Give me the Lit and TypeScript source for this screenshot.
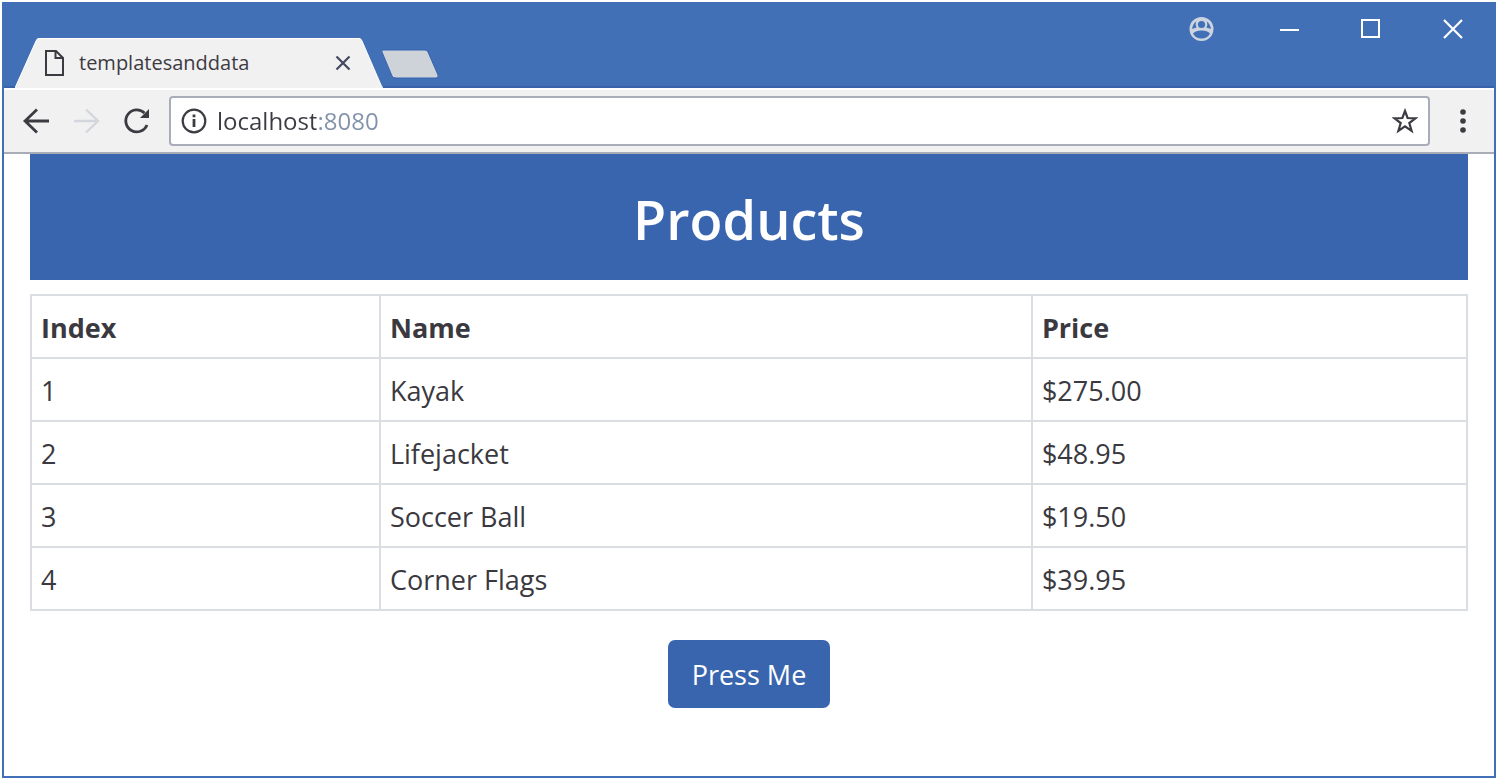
import { LitElement, html, css } from "lit";
import { customElement, state } from "lit/decorators.js";

interface Product {
  name: string;
  price: number;
}

@customElement("browser-titlebar")
export class BrowserTitlebar extends LitElement {
  static styles = css`
    :host {
      display: flex;
      justify-content: space-between;
      align-items: stretch;
      height: 84px;
      padding-left: 11px;
      background: #4270b6;
      border-bottom: 2px solid #3863ab;
    }
    .tabs {
      display: flex;
      align-items: flex-end;
      margin-bottom: -2px;
    }
    .slope {
      display: block;
      flex: none;
    }
    .tab {
      display: flex;
      align-items: center;
      box-sizing: border-box;
      width: 320px;
      height: 50px;
      padding: 0 6px 2px;
      background: #f1f1f2;
      color: #3d3b42;
      font-size: 20px;
      border-top: 1px solid #fff;
    }
    .title {
      flex: 1;
      margin-left: 14px;
      white-space: nowrap;
    }
    button {
      display: grid;
      place-items: center;
      padding: 0;
      border: 0;
      background: none;
      color: inherit;
    }
    .new-tab {
      align-self: flex-end;
      margin: 0 0 9px -2px;
    }
    .controls {
      display: flex;
      align-items: flex-start;
      color: #fff;
    }
    .controls button {
      width: 82px;
      height: 54px;
    }
    .controls .profile {
      width: 94px;
    }
  `;

  render() {
    return html`
      <div class="tabs">
        <svg class="slope" width="24" height="50" viewBox="0 0 24 50">
          <path d="M0 50 L21 3 Q22 0 24 0 V50 Z" fill="#f1f1f2" />
          <path d="M0 50 L21 3 Q22 .5 24 .5" fill="none" stroke="#fff" />
        </svg>
        <div class="tab">
          <svg width="20" height="26" viewBox="0 0 20 26" fill="none" stroke="#3d3b42" stroke-width="2">
            <path d="M1 1 H11 L18 8 V25 H1 Z M10.500 1.5 V8 H17.500" />
          </svg>
          <span class="title">templatesanddata</span>
          <button aria-label="Close tab">
            <svg width="20" height="20" viewBox="0 0 20 20" stroke="#43485c" stroke-width="2.2">
              <path d="M3.5 3.5 L16.5 16.5 M16.5 3.5 L3.5 16.5" />
            </svg>
          </button>
        </div>
        <svg class="slope" width="24" height="50" viewBox="0 0 24 50">
          <path d="M0 0 Q2 0 3 3 L22 47 Q23 50 24 50 H0 Z" fill="#f1f1f2" />
          <path d="M0 .5 Q2 .5 3 3 L22 47 Q23 49.500 24 49.500" fill="none" stroke="#fff" />
        </svg>
        <button class="new-tab" aria-label="New tab">
          <svg width="58" height="30" viewBox="0 0 58 30">
            <path
              d="M2 1 H44 Q46 1 47 3 L57 26 Q58 29 55 29 H15 Q12 29 11 27 L1 3 Q0 1 2 1 Z"
              fill="#ced2d9"
              stroke="#3863ab"
            />
          </svg>
        </button>
      </div>
      <div class="controls">
        <button class="profile" aria-label="Profile">
          <svg width="26" height="26" viewBox="0 0 26 26">
            <circle cx="13.500" cy="13" r="12" fill="#ccd4df" />
            <circle cx="13.500" cy="8.500" r="3.600" fill="#4270b6" />
            <path d="M5 17.500 Q7.500 14.500 13.500 14.500 Q19.500 14.500 22 17.500 Q19.500 22.500 13.500 22.500 Q7.500 22.500 5 17.500 Z" fill="#4270b6" />
            <path d="M8.200 5.500 Q4.500 8 4.200 13 Q6 12 8.600 11.500 Q7 8.500 8.200 5.500 Z" fill="#4270b6" />
            <path d="M18.800 5.500 Q22.500 8 22.800 13 Q21 12 18.400 11.500 Q20 8.500 18.800 5.500 Z" fill="#4270b6" />
          </svg>
        </button>
        <button aria-label="Minimize">
          <svg width="20" height="20" viewBox="0 0 20 20" stroke="currentColor" stroke-width="2">
            <path d="M1 11 H20" />
          </svg>
        </button>
        <button aria-label="Maximize">
          <svg width="20" height="20" viewBox="0 0 20 20" fill="none" stroke="currentColor" stroke-width="2">
            <rect x="1" y="1" width="17" height="17" />
          </svg>
        </button>
        <button aria-label="Close">
          <svg width="20" height="20" viewBox="0 0 20 20" stroke="currentColor" stroke-width="2.2">
            <path d="M1 1 L19 19 M19 1 L1 19" />
          </svg>
        </button>
      </div>
    `;
  }
}

@customElement("browser-toolbar")
export class BrowserToolbar extends LitElement {
  static styles = css`
    :host {
      display: flex;
      align-items: center;
      box-sizing: border-box;
      height: 66px;
      padding-left: 7px;
      background: #f1f1f2;
      border-top: 2px solid #fff;
      border-bottom: 2px solid #a9adb7;
      color: #3d3b42;
    }
    button {
      display: grid;
      place-items: center;
      flex: none;
      width: 50px;
      height: 50px;
      padding: 0;
      border: 0;
      background: none;
      color: inherit;
    }
    .menu {
      width: 64px;
    }
    .address {
      display: flex;
      align-items: center;
      flex: 1;
      box-sizing: border-box;
      height: 50px;
      margin-left: 8px;
      padding-left: 10px;
      background: #fff;
      border: 2px solid #a9adb9;
      border-radius: 4px;
    }
    .address button {
      width: 46px;
      height: 46px;
    }
    input {
      flex: 1;
      min-width: 0;
      margin-left: 10px;
      padding: 0 0 2px;
      border: 0;
      outline: 0;
      font: inherit;
      font-size: 24px;
      color: transparent;
      background: linear-gradient(to right, #3d3b42 99px, #8292ab 99px);
      background-clip: text;
      -webkit-background-clip: text;
    }
  `;

  render() {
    return html`
      <button aria-label="Back">
        <svg width="28" height="28" viewBox="0 0 28 28" fill="none" stroke="currentColor" stroke-width="2.800">
          <path d="M27 14 H3 M15 2.500 L3 14 L15 25.500" />
        </svg>
      </button>
      <button aria-label="Forward" disabled>
        <svg width="28" height="28" viewBox="0 0 28 28" fill="none" stroke="#d3d6dc" stroke-width="2.400">
          <path d="M2 14 H26 M14 2.500 L26 14 L14 25.500" />
        </svg>
      </button>
      <button aria-label="Reload">
        <svg width="28" height="28" viewBox="0 0 28 28" fill="none" stroke="currentColor" stroke-width="2.800">
          <path d="M25 18 A11 11 0 1 1 22.500 6" />
          <path d="M27 2 V11 H18 Z" fill="currentColor" stroke="none" />
        </svg>
      </button>
      <div class="address">
        <svg width="26" height="26" viewBox="0 0 26 26" fill="none" stroke="currentColor" stroke-width="2.200">
          <circle cx="13" cy="13" r="11.300" />
          <path d="M13 11 V19 M13 6.500 V9.300" stroke-width="2.800" />
        </svg>
        <input type="text" aria-label="Address" value="localhost:8080" spellcheck="false" />
        <button aria-label="Bookmark this page">
          <svg width="26" height="26" viewBox="0 0 26 26" fill="none" stroke="currentColor" stroke-width="2.200">
            <path
              d="M13 3 L15.600 10 L23.500 10.300 L17.300 15 L19.600 22.800 L13 18.400 L6.400 22.800 L8.700 15 L2.500 10.300 L10.400 10 Z"
            />
          </svg>
        </button>
      </div>
      <button class="menu" aria-label="Menu">
        <svg width="8" height="26" viewBox="0 0 8 26" fill="currentColor">
          <circle cx="5" cy="4" r="2.800" />
          <circle cx="5" cy="13" r="2.800" />
          <circle cx="5" cy="22" r="2.800" />
        </svg>
      </button>
    `;
  }
}

@customElement("product-page")
export class ProductPage extends LitElement {
  static styles = css`
    :host {
      display: flex;
      flex-direction: column;
      align-items: center;
      padding: 0 26px 68px;
      color: #3a3940;
      font-size: 27px;
      line-height: 40px;
    }
    h1 {
      box-sizing: border-box;
      width: 100%;
      margin: 0 0 14px;
      padding: 32px 16px 28px;
      background: #3965ae;
      color: #fff;
      font-size: 54px;
      font-weight: 600;
      line-height: 66px;
      text-align: center;
    }
    table {
      width: 100%;
      table-layout: fixed;
      border-collapse: collapse;
    }
    th,
    td {
      box-sizing: border-box;
      height: 63px;
      padding: 2px 9px 0;
      border: 2px solid #dadde2;
      text-align: left;
      vertical-align: middle;
    }
    th {
      font-weight: 700;
    }
    .index {
      width: 24.3%;
    }
    .price {
      width: 30.3%;
    }
    .press {
      margin-top: 29px;
      padding: 15px 24px 13px;
      border: 0;
      border-radius: 7px;
      background: #3965ae;
      color: #fff;
      font: inherit;
    }
  `;

  @state() private products: Product[] = [
    { name: "Kayak", price: 275 },
    { name: "Lifejacket", price: 48.95 },
    { name: "Soccer Ball", price: 19.5 },
    { name: "Corner Flags", price: 39.95 },
  ];

  render() {
    return html`
      <h1>Products</h1>
      <table>
        <thead>
          <tr>
            <th class="index" scope="col">Index</th>
            <th scope="col">Name</th>
            <th class="price" scope="col">Price</th>
          </tr>
        </thead>
        <tbody>
          ${this.products.map(
            (p, i) => html`
              <tr>
                <td>${i + 1}</td>
                <td>${p.name}</td>
                <td>$${p.price.toFixed(2)}</td>
              </tr>
            `
          )}
        </tbody>
      </table>
      <button class="press">Press Me</button>
    `;
  }
}

@customElement("app-root")
export class AppRoot extends LitElement {
  static styles = css`
    :host {
      display: flex;
      box-sizing: border-box;
      min-height: 100vh;
      padding: 2px 4px 4px 2px;
      background: #fff;
      font-family: "Open Sans", "Noto Sans", sans-serif;
    }
    .window {
      flex: 1;
      min-width: 0;
      border: 2px solid #4270b6;
      border-top: 0;
    }
  `;

  render() {
    return html`
      <div class="window">
        <browser-titlebar></browser-titlebar>
        <browser-toolbar></browser-toolbar>
        <product-page></product-page>
      </div>
    `;
  }
}
